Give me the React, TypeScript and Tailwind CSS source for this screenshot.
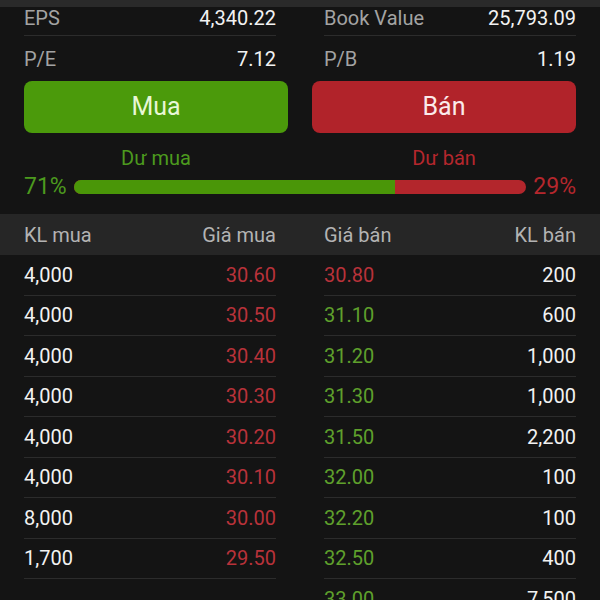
const buys = [
  ["4,000", "30.60"],
  ["4,000", "30.50"],
  ["4,000", "30.40"],
  ["4,000", "30.30"],
  ["4,000", "30.20"],
  ["4,000", "30.10"],
  ["8,000", "30.00"],
  ["1,700", "29.50"],
  ["1,000", "29.00"],
];

const sells: [string, string, boolean][] = [
  ["30.80", "200", false],
  ["31.10", "600", true],
  ["31.20", "1,000", true],
  ["31.30", "1,000", true],
  ["31.50", "2,200", true],
  ["32.00", "100", true],
  ["32.20", "100", true],
  ["32.50", "400", true],
  ["33.00", "7,500", true],
];

const InfoCell = ({label, value}: {label: string; value: string}) => (
  <div className="flex-1 px-6">
    <div className="flex justify-between items-center h-full">
      <span className="text-[#a3a3a3]">{label}</span>
      <span className="text-[#f2f2f2]">{value}</span>
    </div>
  </div>
);

export default function App() {
  const buyPct = 71;
  return (
    <div className="w-[600px] h-[600px] overflow-hidden bg-[#141414] font-['Roboto',sans-serif] text-[20px]">
      <div className="h-[7px] bg-[#2a2a2a]" />
      <div className="flex h-[33px] -mt-[4px]">
        <div className="flex-1 px-6">
          <div className="flex justify-between items-center h-full border-b border-[#2c2c2c] pb-[3px]">
            <span className="text-[#a3a3a3]">EPS</span>
            <span className="text-[#f2f2f2]">4,340.22</span>
          </div>
        </div>
        <div className="flex-1 px-6">
          <div className="flex justify-between items-center h-full border-b border-[#2c2c2c] pb-[3px]">
            <span className="text-[#a3a3a3]">Book Value</span>
            <span className="text-[#f2f2f2]">25,793.09</span>
          </div>
        </div>
      </div>
      <div className="flex h-[45px]">
        <InfoCell label="P/E" value="7.12" />
        <InfoCell label="P/B" value="1.19" />
      </div>
      <div className="flex gap-6 px-6">
        <button className="flex-1 h-[52px] rounded-lg bg-[#4b9a0b] text-[#e8f7d6] text-[25px] font-normal">Mua</button>
        <button className="flex-1 h-[52px] rounded-lg bg-[#b1232a] text-[#fbeaea] text-[25px] font-normal">Bán</button>
      </div>
      <div className="flex gap-6 px-6 mt-[13px] h-[24px] items-center text-[20px]">
        <div className="flex-1 text-center text-[#4c9a1e]">Dư mua</div>
        <div className="flex-1 text-center text-[#b5272d]">Dư bán</div>
      </div>
      <div className="flex items-center px-6 h-[34px] text-[23px]">
        <span className="text-[#4c9a1e] w-[50px]">71%</span>
        <div className="flex-1 h-[14px] rounded-full overflow-hidden flex bg-[#b3262c]">
          <div className="h-full bg-[#4a9608]" style={{width: `${buyPct}%`}} />
        </div>
        <span className="text-[#b5272d] w-[50px] text-right">29%</span>
      </div>
      <div className="mt-[10px] flex h-[41px] bg-[#262626] text-[#b3b3b3] items-center">
        <div className="flex-1 px-6 flex justify-between">
          <span>KL mua</span>
          <span>Giá mua</span>
        </div>
        <div className="flex-1 px-6 flex justify-between">
          <span>Giá bán</span>
          <span>KL bán</span>
        </div>
      </div>
      <div className="flex">
        <div className="flex-1 px-6">
          {buys.map(([vol, price], i) => (
            <div
              key={i}
              className={`h-[40.5px] flex justify-between border-b border-[#2c2c2c] ${i === 8 ? "items-end translate-y-[16px]" : "items-center"}`}
            >
              <span className="text-[#f2f2f2]">{vol}</span>
              <span className="text-[#b8323a]">{price}</span>
            </div>
          ))}
        </div>
        <div className="flex-1 px-6">
          {sells.map(([price, vol, up], i) => (
            <div key={i} className="h-[40.5px] flex justify-between items-center border-b border-[#2c2c2c]">
              <span className={up ? "text-[#5fa02c]" : "text-[#b8323a]"}>{price}</span>
              <span className="text-[#f2f2f2]">{vol}</span>
            </div>
          ))}
        </div>
      </div>
    </div>
  );
}
